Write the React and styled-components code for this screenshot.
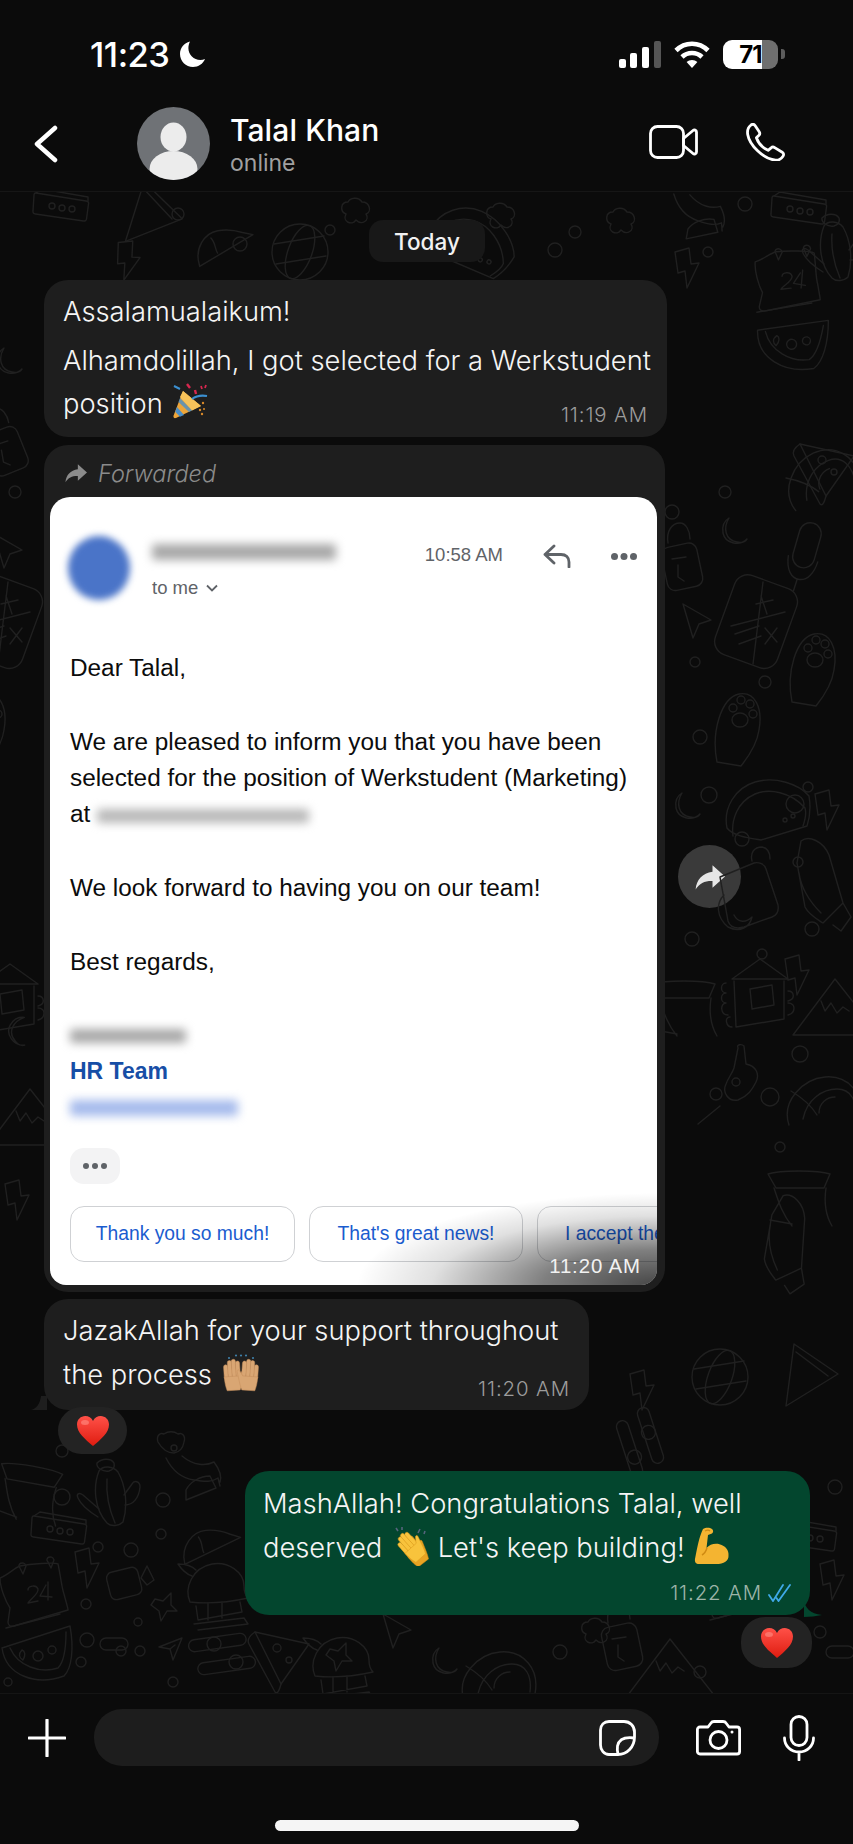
import React from 'react';
import styled, { createGlobalStyle } from 'styled-components';

const GlobalStyle = createGlobalStyle`
    html, body { margin: 0; padding: 0; background: #0b0b0b; }
    * { box-sizing: border-box; }
`;

const SANS = `Inter, "Liberation Sans", sans-serif`;
const MAIL = `"Liberation Sans", Arial, sans-serif`;

const Page = styled.div`
    width: 853px;
    height: 1844px;
    display: flex;
    flex-direction: column;
    background: #0b0b0b;
    color: #fff;
    font-family: ${SANS};
    overflow: hidden;
`;

const Header = styled.header`
    height: 192px;
    flex: none;
    background: #0b0b0b;
    border-bottom: 1px solid #161616;
`;

const StatusBar = styled.div`
    height: 108px;
    display: flex;
    align-items: center;
    justify-content: space-between;
    padding: 0 68px 0 90px;
`;

const Clock = styled.div`
    display: flex;
    align-items: center;
    gap: 9px;
    font-size: 34.5px;
    font-weight: 500;
    letter-spacing: -0.5px;
`;

const StatusIcons = styled.div`
    display: flex;
    align-items: center;
    gap: 13px;
`;

const Battery = styled.div`
    position: relative;
    width: 55px;
    height: 29px;
    border-radius: 9px;
    overflow: hidden;
    background: linear-gradient(90deg, #fff 0 71%, #6f6f6f 71%);
    color: #000;
    font-size: 24px;
    font-weight: 700;
    line-height: 29px;
    text-align: center;
    letter-spacing: -1px;
`;

const BatteryNub = styled.div`
    width: 4px;
    height: 10px;
    margin-left: -10px;
    border-radius: 0 3px 3px 0;
    background: #5c5c5c;
`;

const NavBar = styled.div`
    height: 83px;
    display: flex;
    align-items: flex-start;
    padding: 0 67px 0 34px;
`;

const BackSlot = styled.div`
    width: 103px;
    padding-top: 17px;
`;

const Avatar = styled.div`
    width: 73px;
    height: 73px;
    flex: none;
    margin-top: -1px;
    border-radius: 50%;
    overflow: hidden;
`;

const ContactInfo = styled.div`
    flex: 1;
    margin-left: 20px;
    padding-top: 3px;
`;

const ContactName = styled.div`
    font-size: 30px;
    font-weight: 500;
    line-height: 38px;
    letter-spacing: 0.1px;
`;

const ContactStatus = styled.div`
    font-size: 23px;
    line-height: 28px;
    color: #a0a0a0;
`;

const NavActions = styled.div`
    display: flex;
    align-items: center;
    gap: 48px;
    padding-top: 15px;
`;

const Chat = styled.main`
    position: relative;
    flex: 1;
    overflow: hidden;
    display: flex;
    flex-direction: column;
    padding: 28px 0 0 44px;
`;

const Wallpaper = styled.svg`
    position: absolute;
    inset: 0;
    width: 853px;
    height: 1501px;
    fill: none;
    stroke: #202020;
    stroke-width: 1.4;
    stroke-linecap: round;
    stroke-linejoin: round;
`;

const DatePill = styled.div`
    position: relative;
    align-self: flex-start;
    margin-left: 325px;
    width: 116px;
    height: 42px;
    border-radius: 14px;
    background: #181818;
    font-size: 22.5px;
    font-weight: 500;
    line-height: 44px;
    text-align: center;
    color: #f2f2f2;
`;

const Bubble = styled.div`
    position: relative;
    flex: none;
    width: ${(p) => p.$width}px;
    margin-top: ${(p) => p.$top}px;
    margin-left: ${(p) => p.$left || 0}px;
    padding: ${(p) => p.$pad};
    border-radius: 24px;
    background: ${(p) => (p.$mine ? '#03462e' : '#1e1e1e')};
    font-size: 27.3px;
    font-weight: 350;
    line-height: ${(p) => p.$lh || 44}px;
    color: #f5f5f5;
`;

const TailLeft = styled.svg`
    position: absolute;
    left: -13px;
    bottom: 0;
    fill: #1e1e1e;
`;

const TailRight = styled.svg`
    position: absolute;
    right: -12px;
    bottom: -2px;
    fill: #03462e;
`;

const Line = styled.div`
    white-space: nowrap;
    margin-bottom: ${(p) => p.$after || 0}px;
`;

const Time = styled.div`
    position: absolute;
    right: ${(p) => p.$right}px;
    bottom: ${(p) => p.$bottom}px;
    display: flex;
    align-items: center;
    gap: 6px;
    font-size: 20.4px;
    font-weight: 350;
    line-height: 24px;
    letter-spacing: 0.9px;
    color: ${(p) => p.$color || '#9c9c9c'};
`;

const ForwardRow = styled.div`
    display: flex;
    flex: none;
    align-items: center;
    gap: 13px;
    margin-top: 8px;
`;

const ForwardBubble = styled.div`
    position: relative;
    width: 621px;
    padding: 0 8px 7px 6px;
    border-radius: 24px;
    background: #1e1e1e;
`;

const ForwardedLabel = styled.div`
    height: 52px;
    display: flex;
    align-items: center;
    gap: 11px;
    padding: 4px 0 0 15px;
    font-size: 23.5px;
    font-style: italic;
    font-weight: 350;
    color: #8b8b8b;
`;

const ShareButton = styled.div`
    width: 63px;
    height: 63px;
    margin-top: 16px;
    border-radius: 50%;
    display: flex;
    align-items: center;
    justify-content: center;
    background: #3a3a3a;
`;

const MailCard = styled.div`
    position: relative;
    height: 788px;
    border-radius: 20px 20px 16px 16px;
    overflow: hidden;
    background: #fff;
    color: #111;
    font-family: ${MAIL};
`;

const MailHead = styled.div`
    display: flex;
    align-items: flex-start;
    padding: 39px 20px 0 18px;
    height: 153px;
`;

const MailAvatar = styled.div`
    width: 62px;
    height: 64px;
    border-radius: 50%;
    background: #4a74c8;
    filter: blur(3.5px);
`;

const MailFrom = styled.div`
    flex: 1;
    margin-left: 22px;
    padding-top: 8px;
`;

const BlurBar = styled.div`
    width: ${(p) => p.$width}px;
    height: ${(p) => p.$height}px;
    background: ${(p) => p.$color};
    filter: blur(5px);
    border-radius: 3px;
`;

const ToMe = styled.div`
    display: flex;
    align-items: center;
    gap: 8px;
    margin-top: 17px;
    font-size: 18.5px;
    line-height: 22px;
    color: #5f6368;
`;

const MailTime = styled.div`
    padding-top: 8px;
    font-size: 18.5px;
    line-height: 22px;
    color: #5f6368;
`;

const MailAction = styled.div`
    margin-left: ${(p) => p.$gap}px;
    padding-top: ${(p) => p.$top}px;
`;

const MailBody = styled.div`
    padding: 0 20px;
    font-size: 24.35px;
    line-height: 36px;
    color: #0c0c0c;
`;

const MailPara = styled.div`
    white-space: nowrap;
    margin-bottom: 38px;
`;

const InlineBlur = styled.span`
    display: inline-block;
    vertical-align: middle;
`;

const SignTeam = styled.div`
    font-size: 23px;
    font-weight: 700;
    line-height: 34px;
    padding-bottom: 2px;
    color: #174ea6;
`;

const BlurLine = styled.div`
    height: 36px;
    display: flex;
    align-items: center;
`;

const MorePill = styled.div`
    width: 50px;
    height: 36px;
    margin-top: 22px;
    border-radius: 14px;
    background: #f3f3f4;
    display: flex;
    align-items: center;
    justify-content: center;
`;

const ReplyRow = styled.div`
    display: flex;
    gap: 14px;
    margin-top: 22px;
`;

const ReplyChip = styled.div`
    flex: none;
    width: ${(p) => p.$width}px;
    height: 56px;
    border: 1.5px solid #cfd1d4;
    border-radius: 14px;
    font-size: 19.3px;
    line-height: 53px;
    text-align: ${(p) => (p.$cut ? 'left' : 'center')};
    padding-left: ${(p) => (p.$cut ? 27 : 0)}px;
    white-space: nowrap;
    color: #1a5ccf;
`;

const TimeShade = styled.div`
    position: absolute;
    right: 0;
    bottom: 0;
    width: 300px;
    height: 100px;
    background: radial-gradient(ellipse 100% 92% at 100% 100%, rgba(0, 0, 0, 0.72) 0, rgba(0, 0, 0, 0.5) 38%, rgba(0, 0, 0, 0.12) 75%, rgba(0, 0, 0, 0) 100%);
`;

const EmojiSvg = styled.svg`
    display: inline-block;
    vertical-align: middle;
    margin: ${(p) => p.$margin || '-8px 0 -4px 4px'};
`;

const Reaction = styled.div`
    position: relative;
    flex: none;
    width: ${(p) => p.$width}px;
    height: ${(p) => p.$height}px;
    margin-top: ${(p) => p.$top}px;
    margin-left: ${(p) => p.$left}px;
    border-radius: 24px;
    background: #232323;
    display: flex;
    align-items: center;
    justify-content: center;
`;

const Composer = styled.footer`
    height: 151px;
    flex: none;
    display: flex;
    flex-direction: column;
    background: #0b0b0b;
    border-top: 1px solid #151515;
`;

const ComposerRow = styled.div`
    display: flex;
    align-items: center;
    height: 57px;
    margin-top: 15px;
    padding-left: 28px;
`;

const ComposerInput = styled.div`
    width: 565px;
    height: 57px;
    margin: 0 37px 0 28px;
    border-radius: 28px;
    background: #1d1d1d;
    display: flex;
    align-items: center;
    justify-content: flex-end;
    padding-right: 23px;
`;

const HomeBar = styled.div`
    width: 304px;
    height: 11px;
    margin: 54px auto 0;
    border-radius: 6px;
    background: #f5f5f5;
`;

const IconGap = styled.div`
    width: 42px;
`;

const Moon = () => (
    <svg width="27" height="28" viewBox="0 0 27 28"><path d="M11 1.500C5 3 1 8 1 14c0 7 5.800 13 13 13 5.400 0 10-3.200 12-8-1.400.6-3 .9-4.600.9-6.600 0-12-5.200-12-11.700 0-2.400.6-4.700 1.600-6.700z" fill="#fff" /></svg>
);

const Signal = () => (
    <svg width="42" height="27" viewBox="0 0 42 27">
        <rect x="0" y="18" width="7" height="9" rx="2" fill="#fff" />
        <rect x="11" y="12" width="7" height="15" rx="2" fill="#fff" />
        <rect x="23" y="6" width="7" height="21" rx="2" fill="#fff" />
        <rect x="35" y="0" width="7" height="27" rx="2" fill="#555" />
    </svg>
);

const Wifi = () => (
    <svg width="36" height="27" viewBox="0 0 36 27" fill="none" stroke="#fff" strokeWidth="4.600">
        <path d="M2 9.500C6.500 5 12 2.800 18 2.800S29.500 5 34 9.500" />
        <path d="M8 16c2.800-2.700 6.200-4 10-4s7.200 1.300 10 4" />
        <path d="M18 27l-5.400-6c1.500-1.300 3.300-2 5.400-2s3.900.7 5.400 2z" fill="#fff" stroke="none" />
    </svg>
);

const Chevron = () => (
    <svg width="24" height="38" viewBox="0 0 24 38" fill="none" stroke="#fff" strokeWidth="4.500" strokeLinecap="round" strokeLinejoin="round">
        <path d="M21 3L3 19l18 16" />
    </svg>
);

const Person = () => (
    <svg width="73" height="73" viewBox="0 0 73 73">
        <rect width="73" height="73" fill="#6f7276" />
        <ellipse cx="36.500" cy="30" rx="13" ry="14.500" fill="#ececec" />
        <ellipse cx="36.500" cy="62" rx="24" ry="18" fill="#ececec" />
    </svg>
);

const Video = () => (
    <svg width="49" height="34" viewBox="0 0 49 34" fill="none" stroke="#fff" strokeWidth="2.800" strokeLinejoin="round">
        <rect x="1.500" y="1.500" width="33" height="31" rx="7" />
        <path d="M34.500 13.500L44 5.500c1.200-1 3.500-.5 3.500 1.500v20c0 2-2.300 2.500-3.500 1.500l-9.500-8z" />
    </svg>
);

const Phone = () => (
    <svg width="40" height="38" viewBox="0 0 40 38" fill="none" stroke="#fff" strokeWidth="2.800" strokeLinejoin="round">
        <path d="M5 2c1.500-1 3.200-.8 4.200.7l4 6c.8 1.200.7 2.500-.2 3.500l-2.600 2.600c1.700 5 6.200 10 11.700 12.500l3-2.500c1-.9 2.500-.9 3.600-.2l7.500 4.600c1.500 1 1.800 2.600.8 4-1.800 2.700-4.400 4.300-7.400 4C17 36 3.500 22 1.700 11.500 1.100 7.500 2.300 4 5 2z" />
    </svg>
);

const Popper = () => (
    <EmojiSvg width="38" height="36" viewBox="0 0 38 36" $margin="-14px 0 -4px 2px">
        <path d="M10 8l18 15L3 35c-2 .6-3-.8-2.400-2.500z" fill="#eda53a" />
        <path d="M10 8l18 15-9 4.500L7 14z" fill="#f6c25a" />
        <path d="M4 24l7 8-4 1.800-4.800-5z" fill="#4a8ec8" />
        <path d="M7 15l12 12.500-3 1.500L5.500 19z" fill="#4a8ec8" opacity="0.8" />
        <path d="M1 3l6 3M19 16c4-3 9-4 15-3" stroke="#3b8fd0" strokeWidth="2" fill="none" />
        <path d="M14 1l3 4M22 7l1 4" stroke="#d8274f" strokeWidth="2.400" fill="none" />
        <path d="M28 3l1 3M33 2l-1 3" stroke="#d8274f" strokeWidth="1.800" fill="none" />
        <circle cx="30" cy="20" r="1.200" fill="#d98a2a" /><circle cx="27" cy="27" r="1.200" fill="#d98a2a" /><circle cx="31" cy="26" r="1" fill="#d98a2a" /><circle cx="29" cy="31" r="1.200" fill="#d98a2a" />
    </EmojiSvg>
);

// one open hand standing upright, used by the hands and the clap emoji
const OpenHand = ({ color, edge }) => (
    <g fill={color} stroke={edge} strokeWidth="0.5">
        <rect x="0" y="6" width="4.200" height="15" rx="2.100" />
        <rect x="4" y="2" width="4.200" height="19" rx="2.100" />
        <rect x="8" y="1" width="4.200" height="20" rx="2.100" />
        <rect x="12" y="3" width="4.200" height="18" rx="2.100" />
        <path d="M15 18l3.500-5c1.200-1.500 3-.4 2.400 1.300L18 24c-1 3.500-2 6-3 8H2c-1-3-2-8-2-14z" />
    </g>
);

const Hands = () => (
    <EmojiSvg width="38" height="38" viewBox="0 0 38 38" $margin="-12px 0 -4px 2px">
        <g transform="translate(1 5) rotate(-4)"><OpenHand color="#d9a673" edge="#c48f5c" /></g>
        <g transform="translate(37 5) scale(-1 1) rotate(-4)"><OpenHand color="#d9a673" edge="#c48f5c" /></g>
        <g fill="#3f7fa8"><circle cx="7" cy="4" r="1.100" /><circle cx="14" cy="1.500" r="1.100" /><circle cx="19" cy="1.500" r="1.100" /><circle cx="24" cy="1.500" r="1.100" /><circle cx="31" cy="4" r="1.100" /></g>
    </EmojiSvg>
);

const Clap = () => (
    <EmojiSvg width="38" height="40" viewBox="0 0 38 40" $margin="-12px 0 -4px 2px">
        <g transform="translate(5 17) rotate(-38)"><OpenHand color="#e9a423" edge="#cf8a12" /></g>
        <g transform="translate(1 14) rotate(-42)"><OpenHand color="#f8c33c" edge="#d99a1c" /></g>
        <path d="M4 2l2 3M10 1v3M28 3l-2 4M33 5l-1 3" stroke="#55647c" strokeWidth="1.600" fill="none" />
    </EmojiSvg>
);

const Flex = () => (
    <EmojiSvg width="36" height="38" viewBox="0 0 36 38" $margin="-12px 0 -4px 2px">
        <path d="M9 2c3-2 7-1.500 9 0 1.500 1.200 1.500 3.500 0 4.500l-4 1.500-1.500 13c3-3.500 8-5 13-3.800 6 1.500 9.500 6 9 11C35 34 30 37 22 37H5c-3 0-4.500-2-4-5C3 22 5 10 9 2z" fill="#f4b431" />
        <path d="M13 21c-1 3-3 6-5 7" stroke="#cf8a12" strokeWidth="1.500" fill="none" />
        <path d="M11 4c2-1 4-1 5 0" stroke="#cf8a12" strokeWidth="1.200" fill="none" />
    </EmojiSvg>
);

const Heart = () => (
    <svg width="32" height="30" viewBox="0 0 32 30">
        <defs>
            <linearGradient id="heartFill" x1="0" y1="0" x2="0" y2="1">
                <stop offset="0" stopColor="#ff5148" />
                <stop offset="1" stopColor="#df1c10" />
            </linearGradient>
        </defs>
        <path d="M16 30C8 23 0 17 0 8.500 0 3.500 3.800 0 8.300 0 11.500 0 14.500 1.800 16 5c1.500-3.200 4.500-5 7.700-5C28.200 0 32 3.500 32 8.500 32 17 24 23 16 30z" fill="url(#heartFill)" />
        <ellipse cx="8" cy="6.500" rx="4" ry="2.500" fill="#ff8f86" opacity="0.6" />
    </svg>
);

const ForwardGlyph = ({ size, color }) => (
    <svg width={size} height={size} viewBox="0 0 24 24"><path d="M14 2.500L24 11.500l-10 9v-5.300C8 15 3.500 17 .5 22 1 14.500 6 8.800 14 7.800z" fill={color} /></svg>
);

const ReplyGlyph = () => (
    <svg width="28" height="24" viewBox="0 0 28 24" fill="none" stroke="#5f6368" strokeWidth="2.800" strokeLinecap="round" strokeLinejoin="round">
        <path d="M11 2L2 10.500l9 8.500M2 10.500h16c5 0 8 3 8 7.500v5" />
    </svg>
);

const Dots = ({ width, r, color }) => (
    <svg width={width} height={r * 2} viewBox={`0 0 ${width} ${r * 2}`}>
        <circle cx={r} cy={r} r={r} fill={color} />
        <circle cx={width / 2} cy={r} r={r} fill={color} />
        <circle cx={width - r} cy={r} r={r} fill={color} />
    </svg>
);

const Caret = () => (
    <svg width="12" height="8" viewBox="0 0 12 8" fill="none" stroke="#5f6368" strokeWidth="1.800"><path d="M1 1.500l5 5 5-5" /></svg>
);

const Ticks = () => (
    <svg width="23" height="18" viewBox="0 0 23 18" fill="none" stroke="#3fa9e8" strokeWidth="1.800" strokeLinecap="round"><path d="M1 11l4 6L15 1M8.500 14l2 3L22 1" /></svg>
);

const Plus = () => (
    <svg width="38" height="38" viewBox="0 0 38 38" stroke="#fff" strokeWidth="3.200" strokeLinecap="round"><path d="M19 1v36M1 19h36" /></svg>
);

const Sticker = () => (
    <svg width="37" height="36" viewBox="0 0 37 36" fill="none" stroke="#fff" strokeWidth="2.800" strokeLinejoin="round">
        <path d="M10 1.500h15c6 0 10.500 4.500 10.500 10.500v5C35.500 27 28 34.500 19 34.500h-9C5 34.500 1.500 30 1.500 25V10C1.500 5 5 1.500 10 1.500z" />
        <path d="M35 18c-8-1-15 1-16.500 8-.5 3 0 6 .5 8.500" />
    </svg>
);

const Camera = () => (
    <svg width="45" height="36" viewBox="0 0 45 36" fill="none" stroke="#fff" strokeWidth="2.800" strokeLinejoin="round">
        <path d="M4 7h8l3-4c.6-1 1.500-1.500 3-1.500h9c1.500 0 2.400.5 3 1.500l3 4h8c1.500 0 2.600 1 2.600 2.500v22c0 1.500-1 2.500-2.600 2.500H4c-1.500 0-2.600-1-2.600-2.500v-22C1.400 8 2.500 7 4 7z" />
        <circle cx="22.500" cy="20" r="8.500" />
        <circle cx="36" cy="12" r="1.500" fill="#fff" stroke="none" />
    </svg>
);

const Mic = () => (
    <svg width="32" height="46" viewBox="0 0 32 46" fill="none" stroke="#fff" strokeWidth="2.800" strokeLinecap="round">
        <rect x="8" y="1.500" width="16" height="29" rx="8" />
        <path d="M1.500 23c0 8 6.500 14 14.500 14s14.500-6 14.500-14M16 37v8" />
    </svg>
);

// wallpaper doodles, all drawn around their own 0,0
const Doodles = {
    box: <g><path d="M-26-14l50 8c2 .3 3 1.500 2.500 3l-2 15c-.2 1.500-1.500 2.300-3 2l-48-7c-2-.3-2.800-1.500-2.500-3l1-16c.1-1.500 1-2.300 2-2z" /><path d="M-26-14l6-4 46 8 0 4" /><circle cx="-10" cy="-1" r="3" /><circle cx="0" cy="1" r="3" /><circle cx="10" cy="2" r="3" /></g>,
    cactus: <g><path d="M-16-26c-6 15-5 38 8 52 4 4 12 3 16-1 5-16 3-36-5-50-5-6-15-7-19-1z" /><path d="M-18-34c5-5 14-5 17 0 1 4-1 7-5 8-6 1-13-3-12-8zM-8-18c-1 14 2 30 8 44" /><path d="M-16 12l-16-14c-4-3-7-1-5 3 3 7 12 14 20 19M10 8c8 0 14-7 15-18 0-6-6-7-8-3l-8 11" /></g>,
    calendar: <g><path d="M-36-12c8-3 14-10 20-12 10-2 34-4 38-2 2 8 4 26 6 30 2 8 4 14 4 16l-54 16c-4 1-6-1-6-4l2-14c-4-6-10-20-10-30z" /><path d="M-30 38l54-14M-8 0c0-4 8-6 10-1 1 5-8 10-10 14l10-2M10-5L4 6l12 1M12-8l0 18" /><path d="M-16-22c-4-4 4-8 6-2l-3 8zM12-28c-4-4 4-8 6-2l-3 8z" /></g>,
    bolt: <g><path d="M-10-18L4-22l2 16 8-1L2 18l-2-17-7 2z" /></g>,
    video: <g><rect x="-22" y="-14" width="32" height="28" rx="6" transform="rotate(-14)" /><path d="M11-4l6-12 7 14-7 5z" /></g>,
    star: <g><path d="M-10-8l8 2 8-8 0 12 6 6-10 0-6 10-2-10-8-6z" /></g>,
    melon: <g><path d="M-34-6C-30 22 0 32 28 22 36 14 38-6 34-28zM-26-6C-18 12 4 20 22 14 28 8 30-6 30-22" /><circle cx="2" cy="2" r="5" /><circle cx="16" cy="-4" r="4" /><path d="M-14-4c3 1 4 5 1 10-4-2-5-6-1-10z" /></g>,
    plane: <g><path d="M-11-3L12-12 3 10 0-1zM0-1L5-5" /></g>,
    sliders: <g><rect x="-32" y="-18" width="58" height="12" rx="6" transform="rotate(-8)" /><circle cx="-8" cy="-10" r="7" /><rect x="-26" y="6" width="58" height="12" rx="6" transform="rotate(-8)" /><circle cx="14" cy="8" r="7" /></g>,
    hut: <g><path d="M-30 14c-6-14 2-34 22-38 16-3 32 8 32 22 0 6 2 10 4 12-18 4-40 6-58 4zM-24 18l2 14 44-8-2-10M-26 36l50-6 4 6-50 6M-12 16v16M2 14v16M-24-18c-6-6-14-6-18-6 4 6 8 10 14 12" /></g>,
    dog: <g><path d="M-32-30c-2-6 2-10 6-8 4-3 10-3 14 0 4-2 8 2 6 8-1 6-4 10-10 11-6 0-12-4-16-11zM-24-14c6 12 14 20 28 22 12 2 18 2 24-2l2 8M-8-16C4-6 16-6 24-10 30-2 32 4 30 10" /><circle cx="-16" cy="-24" r="3" /><path d="M-4 28l30-12-6-12c-10 0-20 6-24 14z" /></g>,
    calc: <g><rect x="-34" y="-42" width="66" height="84" rx="14" transform="rotate(20)" /><path d="M-26 4L28-10M6-40L-4 42M4-26l6 18M-1-18l17-4M-22 12l24-8M-18 22l22-8M8 6l12 14M20 6L8 22" /></g>,
    paw: <g><path d="M-28 40C-34 10-24-24-6-28c16-3 24 14 20 36C12 22 4 34-4 44z" /><circle cx="-12" cy="-14" r="4" /><circle cx="-4" cy="-22" r="4" /><circle cx="5" cy="-18" r="4" /><circle cx="8" cy="-8" r="4" /><ellipse cx="-5" cy="-2" rx="8" ry="7" /></g>,
    moon: <g><path d="M-6-14C-12-4-10 8 2 10c4 1 8 0 10-3-8 8-22 4-24-6-1-6 1-12 6-15z" /></g>,
    lock: <g><rect x="-18" y="-12" width="36" height="44" rx="8" transform="rotate(-12)" /><path d="M-12-14c-2-12 4-20 12-20 6 0 10 8 10 16M-8 2l14-2M-2 8v12l6 4" /></g>,
    mic: <g><rect x="-11" y="-30" width="22" height="46" rx="11" transform="rotate(8)" /><path d="M-16 6c0 14 6 22 14 22s14-8 16-20M-4 28l-2 12" /></g>,
    cursor: <g><path d="M-12-18L16-2 4 2-2 16z" /></g>,
    taco: <g><path d="M-38 8c-4-20 8-40 28-46 20-6 44 2 54 14 2 12 0 24-2 30L-4 20c-12-2-28-4-34-12z" /><path d="M-32 16c-2-16 4-34 22-42 14-6 36-2 50 14 2 6 0 12-2 18" /><circle cx="20" cy="0" r="2" /><circle cx="28" cy="-4" r="2" /></g>,
    backpack: <g><path d="M-28-10l34-14c4-1 10 0 12 6l12 36c1 6-1 10-6 12L-4 40c-8 2-14 0-16-6zM4-26c-2-8 2-14 10-14 6 1 8 6 8 12M-24 8c-8 8-8 22 4 32 12 6 22 0 24-10-6 6-14 6-18-2" /></g>,
    rocket: <g><path d="M-24-46c8-6 22 0 28 14l14 48-20 20c-6-4-14-8-18-16l-8-44zM-26-14c2 14 10 28 22 40M18 16l8 14-10 14-8-6" /></g>,
    house: <g><path d="M-28-18L0-38l28 20zM-26-16l2 46 48-8v-38M-10-8l22-4 2 20-22 4zM-34-14c-6 0-6 10 0 10M-34-4c-6 0-6 10 0 10M-34 6c-6 0-6 12 2 12M-30 20c-6 0-4 10 2 10M28-6c6 0 8 8 0 10M28 6c8 0 8 10 0 12" /></g>,
    mountain: <g><path d="M-42 28L0-28l44 56zM-14-6l4 10 6-8 6 10 6-6 6 4" /></g>,
    bowl: <g><path d="M-32-18c12-4 50-4 62 0l-6 14-48 0zM-26-4c4 12 8 26 18 38M26-4C24 10 26 24 32 34M-30 28l22 4" /></g>,
    guitar: <g><path d="M8-34c-2-4 4-4 6-2l2 18c10 2 14 10 10 18-4 8-8 14-18 18-10 2-16-8-12-16 2-6 6-10 8-16z" /><circle cx="6" cy="0" r="4" /><path d="M-10 24l-22 18" /></g>,
    shrimp: <g><path d="M-36 28c-8-24 14-46 36-48 22-2 42 16 34 46M-22 22C-18 2-2-8 12-8c14 0 20 12 18 28M-6 16C-6 6 2 0 10 0M-34-6c10 6 20 14 26 24" /></g>,
    globe: <g><circle cx="0" cy="0" r="28" /><ellipse cx="0" cy="0" rx="12" ry="28" transform="rotate(20)" /><path d="M-26-8l50-8M-24 12l50-8" /></g>,
    tri: <g><path d="M-24 34l8-62 44 30zM-14-20L18 4" /></g>,
    lobe: <g><path d="M-12-10c-8 0-8 10-2 12-4 8 6 12 10 6 6 6 14 0 10-6 6-2 4-12-4-12-4-6-12-4-14 0z" /></g>,
    fox: <g><path d="M-28 28c-2-16 10-30 24-30 8 0 16 2 24 6l10 4-58 22zM-12 4c4 6 2 12 4 16" /></g>,
    pill: <g><rect x="-14" y="-6" width="28" height="12" rx="6" /></g>,
    pizza: <g><path d="M-30-18L24-6-4 34z" /><path d="M-30-18c-6 4-8 8-6 12L-10 42c2 2 4 0 6-8" /><circle cx="-8" cy="-2" r="4" /><circle cx="4" cy="10" r="3" /></g>,
};

const placed = [
    ['box', 62, 15], ['box', 800, 18], ['fox', 222, 40, -10], ['tri', 155, 20, 10], ['lobe', 360, 20], ['lobe', 505, 25], ['lobe', 625, 30], ['dog', 695, 20, 10],
    ['globe', 300, 60], ['taco', 465, 55, 40], ['calendar', 790, 85, 5], ['bolt', 125, 70, 10], ['bolt', 685, 78],
    ['cactus', 840, 60], ['melon', 790, 150, 10],
    ['lock', 680, 365], ['moon', 735, 340], ['mic', 805, 360, 8], ['cursor', 695, 430], ['calc', 757, 430], ['calc', 2, 430], ['paw', 745, 530], ['paw', -10, 530], ['pizza', 830, 270], ['shrimp', 820, 280, -20],
    ['moon', 688, 615], ['taco', 765, 628], ['bolt', 825, 620], ['backpack', 748, 695], ['rocket', 825, 695], ['bolt', 795, 785], ['house', 760, 805], ['mountain', 835, 815], ['bowl', 685, 810], ['guitar', 730, 890], ['shrimp', 825, 905], ['moon', 20, 840, 40], ['house', 10, 810], ['mountain', 30, 925], ['bolt', 15, 1010],
    ['cursor', 6, 360], ['lock', 2, 250, -10], ['moon', 10, 170], ['bowl', 800, 1000], ['rocket', 790, 1055, 20], ['paw', 820, 470],
    ['globe', 720, 1185], ['tri', 810, 1180], ['bolt', 640, 1200], ['sliders', 640, 1250, 80],
    ['cactus', 115, 1305], ['box', 60, 1338], ['calendar', 36, 1398], ['bolt', 85, 1378], ['video', 130, 1390], ['star', 165, 1415], ['melon', 36, 1462], ['plane', 170, 1458], ['sliders', 222, 1462], ['hut', 220, 1396], ['dog', 190, 1280], ['fox', 210, 1340, -5], ['bowl', 30, 1295, 10],
    ['hut', 345, 1470], ['pizza', 285, 1458], ['sliders', 410, 1340, -5], ['cursor', 395, 1440], ['mountain', 670, 1475], ['shrimp', 500, 1480], ['lobe', 600, 1440], ['lock', 620, 1445], ['moon', 445, 1470], ['star', 340, 1465], ['box', 810, 1345], ['bolt', 830, 1390], ['calendar', 740, 1390], ['star', 510, 1400],
    ['pill', 114, 1516], ['pill', 114, 1452], ['pill', 840, 1460],
];

const rings = [
    [178, 22, 6], [240, 52, 7], [330, 38, 5], [575, 40, 6], [555, 58, 7], [708, 60, 5], [745, 12, 7],
    [15, 300, 6], [672, 320, 7], [725, 300, 6], [695, 470, 5], [765, 490, 6], [700, 545, 7],
    [709, 603, 8], [808, 595, 5], [742, 647, 7], [795, 612, 9], [798, 670, 5], [692, 747, 7], [762, 762, 5], [812, 737, 7], [800, 862, 8], [770, 905, 9], [716, 902, 6], [780, 955, 5],
    [62, 1259, 6], [62, 1305, 8], [163, 1308, 7], [161, 1342, 5], [98, 1355, 5], [131, 1358, 7], [86, 1412, 5], [138, 1430, 4], [87, 1448, 7], [121, 1459, 5], [140, 1459, 5], [81, 1470, 5], [8, 1490, 4], [173, 1490, 5],
    [300, 1400, 5], [420, 1415, 6], [560, 1360, 6], [700, 1480, 6], [835, 1295, 7], [820, 1440, 6], [560, 1460, 7],
];

const Wall = () => (
    <Wallpaper viewBox="0 0 853 1501">
        {placed.map(([name, x, y, rot], i) => (
            <g key={i} transform={`translate(${x} ${y}) rotate(${rot || 0})`}>{Doodles[name]}</g>
        ))}
        {rings.map(([x, y, r], i) => <circle key={i} cx={x} cy={y} r={r} />)}
    </Wallpaper>
);

const App = () => {
    return (
        <Page>
            <GlobalStyle />
            <Header>
                <StatusBar>
                    <Clock>11:23 <Moon /></Clock>
                    <StatusIcons>
                        <Signal />
                        <Wifi />
                        <Battery>71</Battery>
                        <BatteryNub />
                    </StatusIcons>
                </StatusBar>
                <NavBar>
                    <BackSlot><Chevron /></BackSlot>
                    <Avatar><Person /></Avatar>
                    <ContactInfo>
                        <ContactName>Talal Khan</ContactName>
                        <ContactStatus>online</ContactStatus>
                    </ContactInfo>
                    <NavActions>
                        <Video />
                        <Phone />
                    </NavActions>
                </NavBar>
            </Header>

            <Chat>
                <Wall />
                <DatePill>Today</DatePill>

                <Bubble $width={623} $top={18} $pad="10px 19px 12px" $lh={43}>
                    <Line $after={6}>Assalamualaikum!</Line>
                    <Line>Alhamdolillah, I got selected for a Werkstudent</Line>
                    <Line>position <Popper /></Line>
                    <Time $right={19} $bottom={10}>11:19 AM</Time>
                </Bubble>

                <ForwardRow>
                    <ForwardBubble>
                        <ForwardedLabel>
                            <ForwardGlyph size={22} color="#8b8b8b" />
                            Forwarded
                        </ForwardedLabel>
                        <MailCard>
                            <MailHead>
                                <MailAvatar />
                                <MailFrom>
                                    <BlurBar $width={184} $height={16} $color="#a8a8a8" />
                                    <ToMe>to me <Caret /></ToMe>
                                </MailFrom>
                                <MailTime>10:58 AM</MailTime>
                                <MailAction $gap={40} $top={8}><ReplyGlyph /></MailAction>
                                <MailAction $gap={40} $top={10}><Dots width={26} r={3.5} color="#5f6368" /></MailAction>
                            </MailHead>
                            <MailBody>
                                <MailPara>Dear Talal,</MailPara>
                                <MailPara>
                                    We are pleased to inform you that you have been<br />
                                    selected for the position of Werkstudent (Marketing)<br />
                                    at <InlineBlur><BlurBar $width={212} $height={14} $color="#b8b8b8" /></InlineBlur>
                                </MailPara>
                                <MailPara>We look forward to having you on our team!</MailPara>
                                <MailPara>Best regards,</MailPara>
                                <BlurLine><BlurBar $width={116} $height={14} $color="#a8a8a8" /></BlurLine>
                                <SignTeam>HR Team</SignTeam>
                                <BlurLine><BlurBar $width={168} $height={16} $color="#a6bbec" /></BlurLine>
                                <MorePill><Dots width={24} r={3} color="#5f6368" /></MorePill>
                                <ReplyRow>
                                    <ReplyChip $width={225}>Thank you so much!</ReplyChip>
                                    <ReplyChip $width={214}>That's great news!</ReplyChip>
                                    <ReplyChip $width={200} $cut>I accept the</ReplyChip>
                                </ReplyRow>
                            </MailBody>
                            <TimeShade />
                            <Time $right={16} $bottom={7} $color="#f2f2f2">11:20 AM</Time>
                        </MailCard>
                    </ForwardBubble>
                    <ShareButton><ForwardGlyph size={30} color="#e6e6e6" /></ShareButton>
                </ForwardRow>

                <Bubble $width={545} $top={7} $pad="10px 19px 13px">
                    <TailLeft width="16" height="14" viewBox="0 0 16 14"><path d="M16 0v14H0c5-1 9-6 10-14z" /></TailLeft>
                    <Line>JazakAllah for your support throughout</Line>
                    <Line>the process <Hands /></Line>
                    <Time $right={19} $bottom={9}>11:20 AM</Time>
                </Bubble>
                <Reaction $width={69} $height={47} $top={-3} $left={14}><Heart /></Reaction>

                <Bubble $width={565} $top={17} $left={201} $pad="11px 18px 45px" $mine>
                    <TailRight width="18" height="16" viewBox="0 0 18 16"><path d="M0 0c1 6 6 13 18 14-6 1-12 2-18 2z" /></TailRight>
                    <Line>MashAllah! Congratulations Talal, well</Line>
                    <Line>deserved <Clap /> Let's keep building! <Flex /></Line>
                    <Time $right={19} $bottom={10} $color="#9db5a9">11:22 AM <Ticks /></Time>
                </Bubble>
                <Reaction $width={71} $height={51} $top={2} $left={697}><Heart /></Reaction>
            </Chat>

            <Composer>
                <ComposerRow>
                    <Plus />
                    <ComposerInput><Sticker /></ComposerInput>
                    <Camera />
                    <IconGap />
                    <Mic />
                </ComposerRow>
                <HomeBar />
            </Composer>
        </Page>
    );
};

export default App;
